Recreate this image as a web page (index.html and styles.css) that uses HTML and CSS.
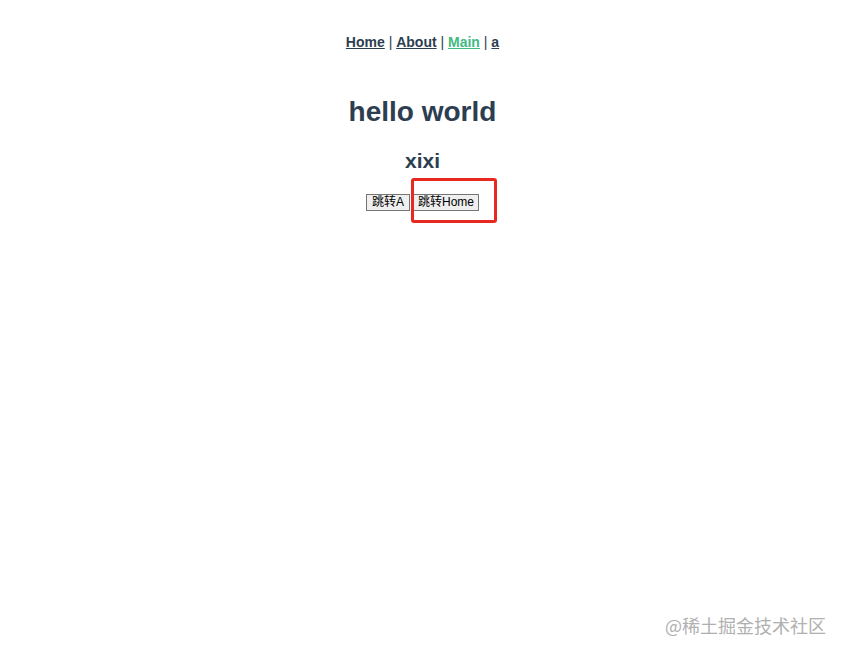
FILE: index.html
```html
<!DOCTYPE html>
<html lang="zh">
<head>
    <meta charset="UTF-8">
    <meta name="viewport" content="width=device-width, initial-scale=1.0">
    <title>vue-router demo</title>
    <link rel="stylesheet" href="styles.css">
</head>
<body>
    <div id="app">
        <nav class="nav">
            <a href="#/">Home</a> |
            <a href="#/about">About</a> |
            <a href="#/main" class="router-link-active">Main</a> |
            <a href="#/a">a</a>
        </nav>
        <div class="main">
            <h1>hello world</h1>
            <h2>xixi</h2>
            <div class="actions">
                <button class="jump-btn">跳转A</button>
                <div class="highlight">
                    <button class="jump-btn">跳转Home</button>
                    <span class="mark"></span>
                </div>
            </div>
        </div>
    </div>
    <div class="watermark">@稀土掘金技术社区</div>
</body>
</html>
```

FILE: styles.css
```css
body {
    margin: 0;
    background: #fff;
}
#app {
    font-family: 'Liberation Sans', Arial, 'Noto Sans CJK SC', sans-serif;
    color: #2c3e50;
    text-align: center;
    min-height: 100vh;
}
.nav {
    padding: 34px 0 0;
    font-size: 14px;
    line-height: 17px;
}
.nav a {
    font-weight: bold;
    color: #2c3e50;
}
.nav a.router-link-active {
    color: #42b983;
}
.main h1 {
    font-size: 28px;
    line-height: 32px;
    margin: 45px 0 0;
}
.main h2 {
    font-size: 21px;
    line-height: 24px;
    margin: 21px 0 0;
}
.actions {
    display: flex;
    justify-content: center;
    align-items: flex-start;
    gap: 3px;
    margin-top: 21px;
    padding-bottom: 20px;
}
.jump-btn {
    font-family: 'Liberation Sans', Arial, 'Noto Sans CJK SC', sans-serif;
    font-size: 12px;
    line-height: 15px;
    padding: 0 5px;
    margin: 0;
    background: #efefef;
    border: 1px solid #767676;
    border-radius: 0;
    color: #000;
}
.highlight {
    position: relative;
    display: flex;
    padding-bottom: 14px;
}
.highlight .jump-btn {
    padding: 0 4px;
}
.mark {
    position: absolute;
    left: -2px;
    top: -16px;
    width: 80px;
    height: 39px;
    border: 3px solid #e8291f;
    border-radius: 3px;
}
.watermark {
    position: absolute;
    right: 19px;
    bottom: 19px;
    font-family: 'Noto Sans CJK SC', sans-serif;
    font-size: 18px;
    color: #b0b0b0;
}
```
